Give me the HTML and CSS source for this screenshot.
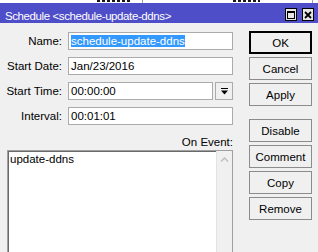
FILE: index.html
```html
<!DOCTYPE html>
<html>
<head>
<meta charset="utf-8">
<link rel="stylesheet" href="styles.css">
</head>
<body>
<div class="win">
  <div class="strip">
    <span class="frag f1"></span>
    <span class="vline v1"></span>
    <span class="frag f2"></span>
    <span class="vline v2"></span>
  </div>
  <div class="titlebar">
    <span class="title">Schedule &lt;schedule-update-ddns&gt;</span>
    <div class="tb-btns">
      <span class="tb-btn"><svg width="8" height="8" viewBox="0 0 8 8"><rect x="0.5" y="0.5" width="7" height="7" fill="none" stroke="#000"/><rect x="0" y="0" width="8" height="2" fill="#000"/></svg></span>
      <span class="tb-btn"><svg width="8" height="8" viewBox="0 0 8 8"><path d="M1 1L7 7M7 1L1 7" stroke="#000" stroke-width="1.8"/></svg></span>
    </div>
  </div>
  <div class="content">
    <div class="form">
      <div class="row"><span class="lbl">Name:</span><div class="field"><span class="sel">schedule-update-ddns</span></div></div>
      <div class="row"><span class="lbl">Start Date:</span><div class="field">Jan/23/2016</div></div>
      <div class="row"><span class="lbl">Start Time:</span><div class="field short">00:00:00</div><div class="dd"><svg width="7" height="7" viewBox="0 0 7 7"><rect x="0" y="0" width="7" height="1" fill="#000"/><path d="M0 2.5H7L3.5 6.5Z" fill="#000"/></svg></div></div>
      <div class="row"><span class="lbl">Interval:</span><div class="field">00:01:01</div></div>
      <div class="event">On Event:</div>
      <div class="textarea">
        <div class="ta-text">update-ddns</div>
        <div class="scroll"><svg width="9" height="5" viewBox="0 0 9 5"><path d="M1 4.5L4.5 1L8 4.5" fill="none" stroke="#c2c2c2" stroke-width="1.6"/></svg></div>
      </div>
    </div>
    <div class="buttons">
      <div class="btn default">OK</div>
      <div class="btn">Cancel</div>
      <div class="btn">Apply</div>
      <div class="btn sep">Disable</div>
      <div class="btn">Comment</div>
      <div class="btn">Copy</div>
      <div class="btn">Remove</div>
    </div>
  </div>
</div>
</body>
</html>
```
FILE: styles.css
```css
body {
  margin: 0;
  font-family: "Liberation Sans", Arial, sans-serif;
  font-size: 11.5px;
  color: #000;
}
.win {
  width: 318px;
  height: 252px;
  overflow: hidden;
  background: #f0f0f0;
  display: flex;
  flex-direction: column;
}
.strip {
  height: 3px;
  flex-shrink: 0;
  background: #fff;
  display: flex;
}
.frag {
  height: 2px;
  background: repeating-linear-gradient(90deg, #1a1a1a 0 3px, transparent 3px 5px);
}
.f1 { margin-left: 97px; width: 33px; }
.v1 { margin-left: 12px; }
.f2 { margin-left: 90px; width: 27px; }
.v2 { margin-left: 52px; }
.vline {
  width: 1px;
  height: 3px;
  background: #a0a0a0;
}
.titlebar {
  height: 20px;
  flex-shrink: 0;
  background: #4e4ec8;
  display: flex;
  align-items: flex-start;
  padding: 0 4px 0 5px;
}
.title {
  flex: 1;
  color: #fff;
  margin-top: 7px;
  line-height: 13px;
  letter-spacing: -0.4px;
  white-space: nowrap;
}
.tb-btns {
  display: flex;
  gap: 5px;
  margin-top: 5px;
}
.tb-btn {
  width: 12px;
  height: 13px;
  box-sizing: border-box;
  border: 1px solid #000;
  background: #e6e6e6;
  display: flex;
  align-items: center;
  justify-content: center;
}
.content {
  display: flex;
  flex: 1;
  min-height: 0;
}
.form {
  width: 233px;
  padding-top: 9px;
  display: flex;
  flex-direction: column;
}
.row {
  display: flex;
  align-items: center;
  height: 18px;
  margin-bottom: 7px;
}
.lbl {
  width: 62px;
  margin-right: 6px;
  text-align: right;
  white-space: nowrap;
}
.field {
  flex: 1;
  height: 18px;
  box-sizing: border-box;
  border: 1px solid #ababab;
  background: #fff;
  padding-left: 2px;
  line-height: 16px;
  white-space: nowrap;
  overflow: hidden;
}
.field.short {
  flex: none;
  width: 145px;
}
.sel {
  background: #3399ff;
  color: #fff;
}
.dd {
  width: 18px;
  height: 18px;
  box-sizing: border-box;
  margin-left: 2px;
  border: 1px solid #ababab;
  background: #f0f0f0;
  display: flex;
  align-items: center;
  justify-content: center;
}
.event {
  height: 19px;
  box-sizing: border-box;
  padding-top: 2px;
  line-height: 16px;
  text-align: right;
}
.textarea {
  margin-left: 7px;
  height: 110px;
  flex-shrink: 0;
  display: flex;
  background: #fff;
  border-top: 1px solid #a0a0a0;
  border-left: 1px solid #a0a0a0;
  box-shadow: inset 1px 1px 0 #696969;
}
.ta-text {
  flex: 1;
  padding: 2px 0 0 2px;
  line-height: 13px;
}
.scroll {
  width: 15px;
  background: #f0f0f0;
  border-left: 1px solid #e3e3e3;
  border-right: 1px solid #a0a0a0;
  display: flex;
  justify-content: center;
  align-items: flex-start;
  padding-top: 6px;
}
.buttons {
  margin-left: 16px;
  width: 63px;
  padding-top: 8px;
  display: flex;
  flex-direction: column;
  gap: 3px;
}
.btn {
  height: 23px;
  box-sizing: border-box;
  border: 1px solid #8c8c8c;
  background: #f0f0f0;
  display: flex;
  align-items: center;
  justify-content: center;
}
.btn.default {
  border-color: #000;
  box-shadow: inset 0 0 0 1px #000;
}
.btn.sep {
  margin-top: 10px;
}
```
